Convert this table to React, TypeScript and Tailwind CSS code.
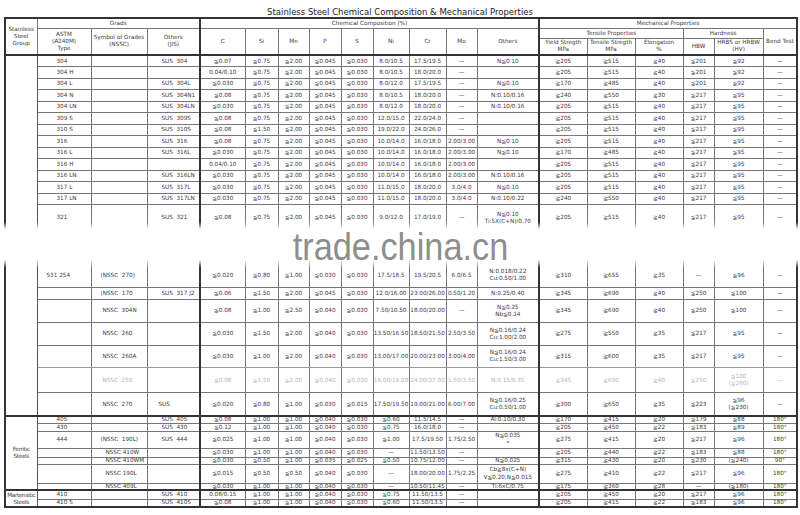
import React from 'react'

type Row = {
  h: string
  a?: string
  ap?: string
  n?: string
  np?: string
  j?: string
  jp?: string
  v: string[]
  g?: { label: string; span: number }
  top?: boolean
  fit?: 'top' | 'bottom'
  light?: boolean
  dash?: boolean
  tight?: boolean
}

const cols = [
  'w-[32px]', 'w-[54px]', 'w-[56px]', 'w-[53px]', 'w-[45px]', 'w-[33px]', 'w-[31px]',
  'w-[32px]', 'w-[32px]', 'w-[36px]', 'w-[37px]', 'w-[31px]', 'w-[62px]', 'w-[48px]',
  'w-[48px]', 'w-[48px]', 'w-[31px]', 'w-[49px]', 'w-[34px]',
]

const D = '—'

const rows: Row[] = [
  { h: 'h-[11.5px]', g: { label: '', span: 21 }, top: true, a: '304', j: 'SUS  304', v: ['≦0.07', '≦0.75', '≦2.00', '≦0.045', '≦0.030', '8.0/10.5', '17.5/19.5', D, 'N≦0.10', '≧205', '≧515', '≧40', '≦201', '≦92', D] },
  { h: 'h-[11.5px]', a: '304 H', v: ['0.04/0.10', '≦0.75', '≦2.00', '≦0.045', '≦0.030', '8.0/10.5', '18.0/20.0', D, '', '≧205', '≧515', '≧40', '≦201', '≦92', D] },
  { h: 'h-[11.5px]', a: '304 L', j: 'SUS  304L', v: ['≦0.030', '≦0.75', '≦2.00', '≦0.045', '≦0.030', '8.0/12.0', '17.5/19.5', D, 'N≦0.10', '≧170', '≧485', '≧40', '≦201', '≦92', D] },
  { h: 'h-[11.5px]', a: '304 N', j: 'SUS  304N1', v: ['≦0.08', '≦0.75', '≦2.00', '≦0.045', '≦0.030', '8.0/10.5', '18.0/20.0', D, 'N:0.10/0.16', '≧240', '≧550', '≧30', '≦217', '≦95', D] },
  { h: 'h-[11.5px]', a: '304 LN', j: 'SUS  304LN', v: ['≦0.030', '≦0.75', '≦2.00', '≦0.045', '≦0.030', '8.0/12.0', '18.0/20.0', D, 'N:0.10/0.16', '≧205', '≧515', '≧40', '≦217', '≦95', D] },
  { h: 'h-[11.5px]', a: '309 S', j: 'SUS  309S', v: ['≦0.08', '≦0.75', '≦2.00', '≦0.045', '≦0.030', '12.0/15.0', '22.0/24.0', D, '', '≧205', '≧515', '≧40', '≦217', '≦95', D] },
  { h: 'h-[11.5px]', a: '310 S', j: 'SUS  310S', v: ['≦0.08', '≦1.50', '≦2.00', '≦0.045', '≦0.030', '19.0/22.0', '24.0/26.0', D, '', '≧205', '≧515', '≧40', '≦217', '≦95', D] },
  { h: 'h-[11.5px]', a: '316', j: 'SUS  316', v: ['≦0.08', '≦0.75', '≦2.00', '≦0.045', '≦0.030', '10.0/14.0', '16.0/18.0', '2.00/3.00', 'N≦0.10', '≧205', '≧515', '≧40', '≦217', '≦95', D] },
  { h: 'h-[11.5px]', a: '316 L', j: 'SUS  316L', v: ['≦0.030', '≦0.75', '≦2.00', '≦0.045', '≦0.030', '10.0/14.0', '16.0/18.0', '2.00/3.00', 'N≦0.10', '≧170', '≧485', '≧40', '≦217', '≦95', D] },
  { h: 'h-[11.5px]', a: '316 H', v: ['0.04/0.10', '≦0.75', '≦2.00', '≦0.045', '≦0.030', '10.0/14.0', '16.0/18.0', '2.00/3.00', '', '≧205', '≧515', '≧40', '≦217', '≦95', D] },
  { h: 'h-[11.5px]', a: '316 LN', j: 'SUS  316LN', v: ['≦0.030', '≦0.75', '≦2.00', '≦0.045', '≦0.030', '10.0/14.0', '16.0/18.0', '2.00/3.00', 'N:0.10/0.16', '≧205', '≧515', '≧40', '≦217', '≦95', D] },
  { h: 'h-[11.5px]', a: '317 L', j: 'SUS  317L', v: ['≦0.030', '≦0.75', '≦2.00', '≦0.045', '≦0.030', '11.0/15.0', '18.0/20.0', '3.0/4.0', 'N≦0.10', '≧205', '≧515', '≧40', '≦217', '≦95', D] },
  { h: 'h-[11.5px]', a: '317 LN', j: 'SUS  317LN', v: ['≦0.030', '≦0.75', '≦2.00', '≦0.045', '≦0.030', '11.0/15.0', '18.0/20.0', '3.0/4.0', 'N:0.10/0.22', '≧240', '≧550', '≧40', '≦217', '≦95', D] },
  { h: 'h-[41px]', fit: 'top', a: '321', j: 'SUS  321', v: ['≦0.08', '≦0.75', '≦2.00', '≦0.045', '≦0.030', '9.0/12.0', '17.0/19.0', D, 'N≦0.10\nTi:5X(C+N)/0.70', '≧205', '≧515', '≧40', '≦217', '≦95', D] },
  { h: 'h-[42px]', fit: 'bottom', a: 'S31 254', ap: 'pl-[9px]', n: '(NSSC  270)', v: ['≦0.020', '≦0.80', '≦1.00', '≦0.030', '≦0.030', '17.5/18.5', '19.5/20.5', '6.0/6.5', 'N:0.018/0.22\nCu:0.50/1.00', '≧310', '≧655', '≧35', D, '≦96', D] },
  { h: 'h-[11.5px]', n: '(NSSC  170', j: 'SUS  317 J2', v: ['≦0.06', '≦1.50', '≦2.00', '≦0.045', '≦0.030', '12.0/16.00', '23.00/26.00', '0.50/1.20', 'N:0.25/0.40', '≧345', '≧690', '≧40', '≦250', '≦100', D] },
  { h: 'h-[23.5px]', n: 'NSSC  304N', np: 'pl-[11px]', v: ['≦0.08', '≦1.00', '≦2.50', '≦0.040', '≦0.030', '7.50/10.50', '18.00/20.00', D, 'N≦0.25\nNb≦0.14', '≧345', '≧690', '≧40', '≦250', '≦100', D] },
  { h: 'h-[22.5px]', n: 'NSSC  260', np: 'pl-[11px]', v: ['≦0.030', '≦1.50', '≦2.00', '≦0.040', '≦0.030', '13.50/16.50', '18.50/21.50', '2.50/3.50', 'N≦0.16/0.24\nCu:1.00/2.00', '≧275', '≧550', '≧35', '≦217', '≦95', D] },
  { h: 'h-[22.5px]', dash: true, n: 'NSSC  260A', np: 'pl-[11px]', v: ['≦0.030', '≦1.00', '≦2.00', '≦0.040', '≦0.030', '13.00/17.00', '20.00/23.00', '3.00/4.00', 'N≦0.16/0.24\nCu:1.50/3.00', '≧315', '≧600', '≧35', '≦217', '≦95', D] },
  { h: 'h-[25px]', light: true, n: 'NSSC  250', np: 'pl-[11px]', v: ['≦0.08', '≦1.50', '≦2.00', '≦0.040', '≦0.030', '16.00/19.00', '24.00/27.00', '1.50/3.50', 'N:0.15/0.35', '≧345', '≧690', '≧40', '≦250', '≦100\n(≦260)', D] },
  { h: 'h-[23.5px]', n: 'NSSC  270', np: 'pl-[11px]', j: 'SUS', jp: 'pl-[11px]', v: ['≦0.020', '≦0.80', '≦1.00', '≦0.030', '≦0.015', '17.50/19.50', '19.00/21.00', '6.00/7.00', 'N≦0.16/0.25\nCu:0.50/1.00', '≧300', '≧650', '≧35', '≦223', '≦96\n(≦230)', D] },
  { h: 'h-[7px]', tight: true, g: { label: 'Ferritic\nSteels', span: 7 }, top: true, a: '405', j: 'SUS  405', v: ['≦0.08', '≦1.00', '≦1.00', '≦0.040', '≦0.030', '≦0.60', '11.5/14.5', D, 'Al:0.10/0.30', '≧170', '≧415', '≧20', '≦179', '≦88', '180°'] },
  { h: 'h-[8px]', tight: true, a: '430', j: 'SUS  430', v: ['≦0.12', '≦1.00', '≦1.00', '≦0.040', '≦0.030', '≦0.75', '16.0/18.0', D, '', '≧205', '≧450', '≧22', '≦183', '≦89', '180°'] },
  { h: 'h-[17px]', tight: true, a: '444', n: '(NSSC  190L)', j: 'SUS  444', v: ['≦0.025', '≦1.00', '≦1.00', '≦0.040', '≦0.030', '≦1.00', '17.5/19.50', '1.75/2.50', 'N≦0.035\n*', '≧275', '≧415', '≧20', '≦217', '≦96', '180°'] },
  { h: 'h-[9px]', tight: true, n: 'NSSC 410W', np: 'pl-[14px]', v: ['≦0.030', '≦1.00', '≦1.00', '≦0.040', '≦0.030', D, '11.50/13.50', D, '', '≧205', '≧440', '≧22', '≦183', '≦88', '180°'] },
  { h: 'h-[7px]', tight: true, n: 'NSSC 410WM', np: 'pl-[14px]', v: ['≦0.030', '≦0.50', '≦1.00', '≦0.035', '≦0.025', '≦0.50', '10.75/12.00', D, 'N≦0.025', '≧315', '≧430', '≧20', '≦230', '(≦240)', '90°'] },
  { h: 'h-[19px]', tight: true, n: 'NSSC 190L', np: 'pl-[14px]', v: ['≦0.015', '≦0.50', '≦0.50', '≦0.040', '≦0.030', D, '18.00/20.00', '1.75/2.25', 'Cb≧8x(C+N)\nV≦0.20,N≦0.015', '≧275', '≧410', '≧22', '≦217', '≦96', '180°'] },
  { h: 'h-[7px]', tight: true, n: 'NSSC 409L', np: 'pl-[14px]', v: ['≦0.030', '≦1.00', '≦1.00', '≦0.040', '≦0.030', D, '10.50/11.45', D, 'Ti:6xC/0.75', '≧175', '≧360', '≧28', D, '(≦180)', '180°'] },
  { h: 'h-[9px]', tight: true, g: { label: 'Martensitic\nSteels', span: 2 }, top: true, a: '410', j: 'SUS  410', v: ['0.08/0.15', '≦1.00', '≦1.00', '≦0.040', '≦0.030', '≦0.75', '11.50/13.5', D, '', '≧205', '≧450', '≧20', '≦217', '≦96', '180°'] },
  { h: 'h-[8px]', tight: true, a: '410 S', j: 'SUS  410S', v: ['≦0.08', '≦1.00', '≦1.00', '≦0.040', '≦0.030', '≦0.60', '11.50/13.5', D, '', '≧205', '≧415', '≧22', '≦183', '≦96', '180°'] },
]

function Th({ children, cls = '', rowSpan, colSpan }: { children?: React.ReactNode; cls?: string; rowSpan?: number; colSpan?: number }) {
  return (
    <th rowSpan={rowSpan} colSpan={colSpan} className={`border border-[#777] p-0 text-center align-middle font-normal whitespace-pre ${cls}`}>
      {children}
    </th>
  )
}

function BodyRow({ r }: { r: Row }) {
  const tb = r.top ? 'border-t-2 border-t-[#333]' : ''
  const bb = r.dash ? 'border-b-[#999] border-b-dashed' : ''
  const va = r.fit === 'top' ? 'align-top' : r.fit === 'bottom' ? 'align-bottom' : 'align-middle'
  const inner = r.fit === 'top' ? 'h-[25px] flex flex-col justify-center' : r.fit === 'bottom' ? 'h-[24px] flex flex-col justify-center' : ''
  const td = `border border-[#777] p-0 whitespace-pre ${va} ${tb} ${bb}`

  return (
    <tr className={`${r.h} ${r.light ? 'text-[#b4b4b4]' : ''} ${r.tight ? 'leading-[5px]' : ''}`}>
      {r.g && (
        <td rowSpan={r.g.span} className="border border-[#555] border-t-2 border-t-[#333] p-0 text-center align-middle whitespace-pre leading-[7px] tracking-[-0.3px] text-[#3a3a3a]">
          {r.g.label}
        </td>
      )}
      <td className={`${td} text-left`}>
        <div className={`${inner} ${r.ap ?? 'pl-[19px]'}`}>{r.a}</div>
      </td>
      <td className={`${td} text-left`}>
        <div className={`${inner} ${r.np ?? 'pl-[9px]'}`}>{r.n}</div>
      </td>
      <td className={`${td} text-left`}>
        <div className={`${inner} ${r.jp ?? 'pl-[14px]'}`}>{r.j}</div>
      </td>
      {r.v.map((val, i) => (
        <td
          key={i}
          className={`${td} text-center ${i === 0 || i === 9 ? 'border-l-2 border-l-[#333]' : ''}`}
        >
          <div className={`${inner} ${r.tight && val.includes('\n') ? 'leading-[7.5px]' : ''}`}>{val}</div>
        </td>
      ))}
    </tr>
  )
}

export default function App() {
  return (
    <div className="relative min-h-[515px] bg-white font-['DejaVu_Sans',sans-serif] text-[#3a3a3a]">
      <div className="pt-[8px] text-center text-[8.5px] leading-[9px] text-[#222]">
        Stainless Steel Chemical Composition &amp; Mechanical Properties
      </div>

      <div className="px-[4px]">
        <table className="w-[792px] table-fixed border-collapse border-2 border-[#333] text-[5.7px] leading-[7px]">
          <colgroup>
            {cols.map((c, i) => (
              <col key={i} className={c} />
            ))}
          </colgroup>
          <thead>
            <tr className="h-[10px]">
              <Th rowSpan={3}>{'Stainless\nSteel\nGroup'}</Th>
              <Th colSpan={3}>Grads</Th>
              <Th colSpan={9} cls="border-l-2 border-l-[#333]">Chemical Composition (%)</Th>
              <Th colSpan={6} cls="border-l-2 border-l-[#333]">Mechanical Properties</Th>
            </tr>
            <tr className="h-[10px]">
              <Th rowSpan={2}>{'ASTM\n(A240M)\nType'}</Th>
              <Th rowSpan={2}>{'Symbol of Grades\n(NSSC)'}</Th>
              <Th rowSpan={2}>{'Others\n(JIS)'}</Th>
              <Th rowSpan={2} cls="border-l-2 border-l-[#333]">C</Th>
              <Th rowSpan={2}>Si</Th>
              <Th rowSpan={2}>Mn</Th>
              <Th rowSpan={2}>P</Th>
              <Th rowSpan={2}>S</Th>
              <Th rowSpan={2}>Ni</Th>
              <Th rowSpan={2}>Cr</Th>
              <Th rowSpan={2}>Mo</Th>
              <Th rowSpan={2}>Others</Th>
              <Th colSpan={3} cls="border-l-2 border-l-[#333]">Tensile Properties</Th>
              <Th colSpan={2}>Hardness</Th>
              <Th rowSpan={2}>Bend Test</Th>
            </tr>
            <tr className="h-[17px]">
              <Th cls="border-l-2 border-l-[#333]">{'Yield Stregth\nMPa'}</Th>
              <Th>{'Tensile Stregth\nMPa'}</Th>
              <Th>{'Elongation\n%'}</Th>
              <Th>HBW</Th>
              <Th>{'HRBS or HRBW\n(HV)'}</Th>
            </tr>
          </thead>
          <tbody>
            {rows.map((r, i) => (
              <BodyRow key={i} r={r} />
            ))}
          </tbody>
        </table>
      </div>

      {/* watermark band */}
      <div className="pointer-events-none absolute left-0 right-0 top-[222px] h-[46px] bg-[linear-gradient(to_bottom,transparent,white_16%,white_82%,transparent)]" />
      <div className="pointer-events-none absolute left-0 right-0 top-[227px] text-center font-['Liberation_Sans',Arial,sans-serif] text-[39px] leading-[39px] text-[#8e8e8e]">
        <span className="inline-block scale-x-[0.88]">trade.china.cn</span>
      </div>
    </div>
  )
}
